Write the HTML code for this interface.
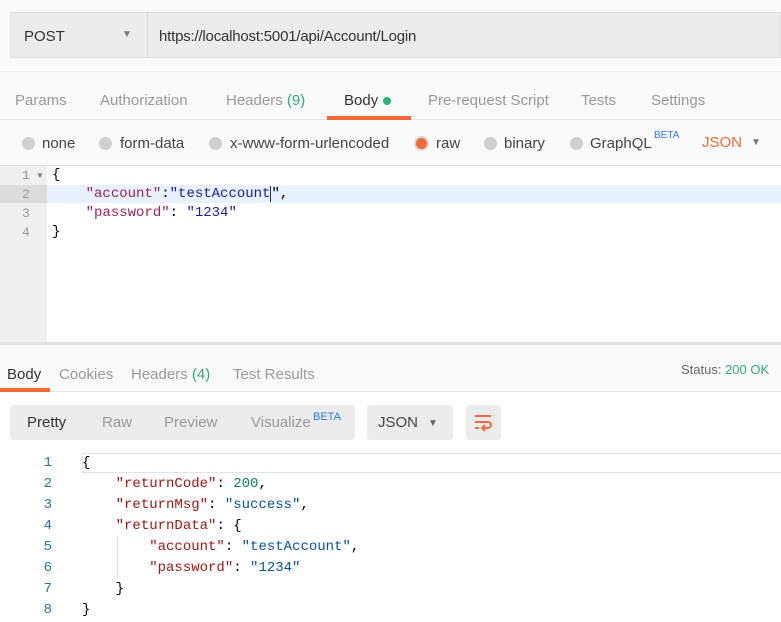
<!DOCTYPE html>
<html><head><meta charset="utf-8"><style>
*{margin:0;padding:0;box-sizing:border-box}
body{width:781px;height:622px;overflow:hidden;background:#fafafa;font-family:"Liberation Sans",sans-serif;position:relative;color:#333}
.a{position:absolute;white-space:nowrap}
.m{font-family:"Liberation Mono",monospace;font-size:14px}
.g{color:#999}
.k{color:#a11d5d}.s{color:#1a1aa6}
.rk{color:#a31515}.rs{color:#0451a5}.rn{color:#098658}
.dot{position:absolute;width:13px;height:13px;border-radius:50%;background:#d0d0d0;top:137px}
</style></head><body>
<div class="a" style="left:10px;top:12px;width:771px;height:46px;background:#ececec;border:1px solid #e0e0e0"></div>
<div class="a" style="left:147px;top:12px;width:1px;height:46px;background:#d8d8d8"></div>
<div class="a" style="left:24px;top:28px;font-size:15px;color:#333">POST</div>
<div class="a" style="left:122px;top:29px;font-size:10px;color:#777">▼</div>
<div class="a" style="left:159px;top:28px;font-size:15px;color:#333;letter-spacing:-0.2px">https://localhost:5001/api/Account/Login</div>
<div class="a" style="left:0;top:71px;width:781px;height:1px;background:#eee"></div>
<div class="a g" style="left:15px;top:92px;font-size:15px">Params</div>
<div class="a g" style="left:100px;top:92px;font-size:15px">Authorization</div>
<div class="a g" style="left:226px;top:92px;font-size:15px">Headers <span style="color:#2dab77">(9)</span></div>
<div class="a" style="left:344px;top:92px;font-size:15px;color:#333">Body</div>
<div class="a" style="left:383px;top:97px;width:8px;height:8px;border-radius:50%;background:#26b47f"></div>
<div class="a g" style="left:428px;top:92px;font-size:15px">Pre-request Script</div>
<div class="a g" style="left:581px;top:92px;font-size:15px">Tests</div>
<div class="a g" style="left:651px;top:92px;font-size:15px">Settings</div>
<div class="a" style="left:0;top:119px;width:781px;height:1px;background:#e6e6e6"></div>
<div class="a" style="left:327px;top:116px;width:84px;height:4px;background:#f26b3a"></div>
<div class="dot" style="left:22px"></div><div class="a" style="left:42px;top:135px;font-size:15px;color:#444">none</div>
<div class="dot" style="left:99px"></div><div class="a" style="left:120px;top:135px;font-size:15px;color:#444">form-data</div>
<div class="dot" style="left:209px"></div><div class="a" style="left:230px;top:135px;font-size:15px;color:#444">x-www-form-urlencoded</div>
<div class="dot" style="left:416px;background:#f26b3a;box-shadow:0 0 0 2px #d8d8d8;width:11px;height:11px;top:138px"></div><div class="a" style="left:436px;top:135px;font-size:15px;color:#444">raw</div>
<div class="dot" style="left:484px"></div><div class="a" style="left:504px;top:135px;font-size:15px;color:#444">binary</div>
<div class="dot" style="left:570px"></div><div class="a" style="left:590px;top:135px;font-size:15px;color:#444">GraphQL</div>
<div class="a" style="left:654px;top:130px;font-size:10px;color:#2a7ae2">BETA</div>
<div class="a" style="left:702px;top:134px;font-size:15px;color:#f26b3a">JSON</div>
<div class="a" style="left:751px;top:137px;font-size:10px;color:#777">▼</div>
<div class="a" style="left:0;top:165px;width:781px;height:178px;background:#fff;border-top:1px solid #e0e0e0"></div>
<div class="a" style="left:0;top:166px;width:47px;height:177px;background:#f0f0f0"></div>
<div class="a" style="left:47px;top:185px;width:734px;height:18px;background:#e8f2fe"></div>
<div class="a" style="left:0;top:185px;width:47px;height:18px;background:#dcdcdc"></div>
<div class="a m" style="left:22px;top:166px;line-height:19px;color:#999;font-size:13px">1<br>2<br>3<br>4</div>
<div class="a" style="left:36px;top:171px;font-size:8px;color:#777">▼</div>
<div class="a m" style="left:52px;top:166px;line-height:19px;color:#000;font-size:14px">{<br>&nbsp;&nbsp;&nbsp;&nbsp;<span class="k">"account"</span>:<span class="s">"testAccount</span><span style="border-left:1px solid #333"></span>",<br>&nbsp;&nbsp;&nbsp;&nbsp;<span class="k">"password"</span>: <span class="s">"1234"</span><br>}</div>
<div class="a" style="left:0;top:342px;width:781px;height:3px;background:#e2e2e2"></div>
<div class="a" style="left:7px;top:366px;font-size:15px;color:#333">Body</div>
<div class="a g" style="left:59px;top:366px;font-size:15px">Cookies</div>
<div class="a g" style="left:131px;top:366px;font-size:15px">Headers <span style="color:#2dab77">(4)</span></div>
<div class="a g" style="left:233px;top:366px;font-size:15px">Test Results</div>
<div class="a" style="left:681px;top:362px;font-size:13px;color:#666">Status: <span style="color:#2dab77">200 OK</span></div>
<div class="a" style="left:0;top:391px;width:781px;height:1px;background:#e6e6e6"></div>
<div class="a" style="left:0;top:388px;width:50px;height:4px;background:#f26b3a"></div>
<div class="a" style="left:0;top:392px;width:781px;height:230px;background:#fff"></div>
<div class="a" style="left:10px;top:405px;width:345px;height:35px;background:#ececec;border-radius:3px"></div>
<div class="a" style="left:27px;top:414px;font-size:15px;color:#333">Pretty</div>
<div class="a g" style="left:102px;top:414px;font-size:15px">Raw</div>
<div class="a g" style="left:164px;top:414px;font-size:15px">Preview</div>
<div class="a g" style="left:251px;top:414px;font-size:15px">Visualize</div>
<div class="a" style="left:313px;top:411px;font-size:11px;color:#2a7ae2">BETA</div>
<div class="a" style="left:367px;top:405px;width:86px;height:35px;background:#ececec;border-radius:3px"></div>
<div class="a" style="left:378px;top:414px;font-size:15px;color:#444">JSON</div>
<div class="a" style="left:428px;top:418px;font-size:10px;color:#666">▼</div>
<div class="a" style="left:466px;top:405px;width:35px;height:35px;background:#ececec;border-radius:3px"></div>
<svg class="a" style="left:472px;top:411px" width="22" height="22" viewBox="0 0 22 22" fill="none" stroke="#f26b3a" stroke-width="2"><path d="M3 5H19M3 11H16a3 3 0 0 1 0 6H11M13 14l-3 3 3 3M3 17H7"/></svg>
<div class="a" style="left:82px;top:453px;width:699px;height:20px;border:1px solid #e2e2e2;border-right:none"></div>
<div class="a m" style="left:40px;top:453px;line-height:21px;color:#237893;text-align:right;width:12px">1<br>2<br>3<br>4<br>5<br>6<br>7<br>8</div>
<div class="a" style="left:117px;top:536px;width:1px;height:42px;background:#e0e0e0"></div>
<div class="a m" style="left:82px;top:453px;line-height:21px;color:#000">{<br>&nbsp;&nbsp;&nbsp;&nbsp;<span class="rk">"returnCode"</span>: <span class="rn">200</span>,<br>&nbsp;&nbsp;&nbsp;&nbsp;<span class="rk">"returnMsg"</span>: <span class="rs">"success"</span>,<br>&nbsp;&nbsp;&nbsp;&nbsp;<span class="rk">"returnData"</span>: {<br>&nbsp;&nbsp;&nbsp;&nbsp;&nbsp;&nbsp;&nbsp;&nbsp;<span class="rk">"account"</span>: <span class="rs">"testAccount"</span>,<br>&nbsp;&nbsp;&nbsp;&nbsp;&nbsp;&nbsp;&nbsp;&nbsp;<span class="rk">"password"</span>: <span class="rs">"1234"</span><br>&nbsp;&nbsp;&nbsp;&nbsp;}<br>}</div>
</body></html>
